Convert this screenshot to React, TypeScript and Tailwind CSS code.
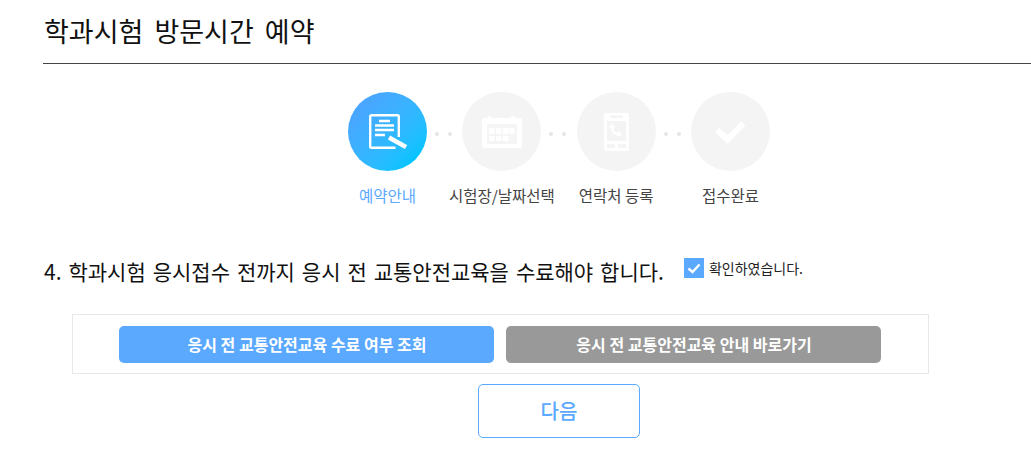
const FONT = "font-['Noto_Sans_CJK_KR','Noto_Sans',sans-serif]";

const Dots = () => (
  <div className="flex h-[79px] w-[35.3px] items-center justify-center gap-[9px] pt-[5px] pr-[2px]">
    <span className="h-[4px] w-[4px] rounded-full bg-[#e6e6e6]" />
    <span className="h-[4px] w-[4px] rounded-full bg-[#e6e6e6]" />
  </div>
);

const DocIcon = () => (
  <svg width="38" height="36" viewBox="0 0 38 36" fill="none">
    <path d="M29.800 23V2.500a1.300 1.300 0 0 0-1.300-1.300H2.500a1.300 1.300 0 0 0-1.300 1.300v30a1.300 1.300 0 0 0 1.300 1.300h24" stroke="#fff" strokeWidth="2.400" />
    <path d="M10 7h11M6 11.500h19M6 16h19M6 21h10" stroke="#fff" strokeWidth="2.400" />
    <path d="M20 23.500l17 9.500" stroke="#fff" strokeWidth="4.500" />
  </svg>
);

const CalendarIcon = () => (
  <svg width="40" height="32" viewBox="0 0 40 32">
    <path d="M2 2h4V0h3v2h20V0h4v2h5a2 2 0 0 1 2 2v26a2 2 0 0 1-2 2H2a2 2 0 0 1-2-2V4a2 2 0 0 1 2-2z" fill="#ffffff" />
    <rect x="5" y="8" width="30" height="20" fill="#f5f5f5" />
    <g fill="#ffffff">
      <rect x="7" y="12" width="5.500" height="6" />
      <rect x="14" y="12" width="5.500" height="6" />
      <rect x="21" y="12" width="5.500" height="6" />
      <rect x="27.500" y="12" width="5" height="6" />
      <rect x="7" y="20" width="5.500" height="5" />
      <rect x="14" y="20" width="5.500" height="5" />
      <rect x="21" y="20" width="5.500" height="5" />
    </g>
  </svg>
);

const PhoneIcon = () => (
  <svg width="25" height="38" viewBox="0 0 25 38">
    <rect width="25" height="38" rx="2.500" fill="#ffffff" />
    <rect x="6" y="2.500" width="13" height="2.500" fill="#f4f4f4" />
    <rect x="3" y="8" width="19" height="20" fill="#f4f4f4" />
    <rect x="3" y="31" width="8" height="4" fill="#f4f4f4" />
    <rect x="14" y="31" width="8" height="4" fill="#f4f4f4" />
    <path d="M5.500 12.500l3-1.500 2.200 3.500-1.700 1.500c.8 1.800 2.200 3.200 4 4l1.600-1.700 3.400 2.200-1.500 3c-5 0-10.500-6-10.500-11z" fill="#ffffff" />
  </svg>
);

const CheckIcon = () => (
  <svg width="32" height="24" viewBox="0 0 32 24" fill="none">
    <path d="M3 10L13.500 19.500 29.500 3.500" stroke="#ffffff" strokeWidth="6" />
  </svg>
);

const steps = [
  { label: "예약안내", icon: <DocIcon />, active: true },
  { label: "시험장/날짜선택", icon: <CalendarIcon />, active: false },
  { label: "연락처 등록", icon: <PhoneIcon />, active: false },
  { label: "접수완료", icon: <CheckIcon />, active: false },
];

export default function App() {
  return (
    <div className={`${FONT} h-[476px] w-[1031px] overflow-hidden bg-white`}>
      <div className="ml-[43px] h-[64px] border-b border-[#444444]">
        <h1 className="pt-[12px] pl-[1px] text-[27px] leading-[38px] font-normal text-[#111111] [word-spacing:5px]">
          학과시험 방문시간 예약
        </h1>
      </div>

      <div className="mt-[28px] flex justify-center pl-[87px]">
        {steps.map((step, idx) => (
          <div key={step.label} className="flex">
            {idx > 0 && <Dots />}
            <div className="flex w-[79px] flex-col items-center">
              <div
                className={
                  step.active
                    ? "flex h-[79px] w-[79px] items-center justify-center rounded-full bg-gradient-to-br from-[#4aa5ff] from-[15%] to-[#00c4ff] to-[85%]"
                    : "flex h-[79px] w-[79px] items-center justify-center rounded-full bg-[#f4f4f4]"
                }
              >
                {step.icon}
              </div>
              <span
                className={
                  step.active
                    ? "mt-[13px] text-[15.5px] leading-[22px] whitespace-nowrap text-[#5aa9ff]"
                    : "mt-[13px] text-[15.5px] leading-[22px] whitespace-nowrap text-[#444444]"
                }
              >
                {step.label}
              </span>
            </div>
          </div>
        ))}
      </div>

      <div className="mt-[50px] ml-[44px] flex items-start">
        <p className="text-[21px] leading-[30px] whitespace-nowrap text-[#111111] [word-spacing:2.25px]">
          4. 학과시험 응시접수 전까지 응시 전 교통안전교육을 수료해야 합니다.
        </p>
        <div className="mt-[2px] ml-[20px] flex items-center gap-[5px]">
          <div className="flex h-[20px] w-[20px] items-center justify-center bg-[#5aa9ff]">
            <svg width="14" height="11" viewBox="0 0 14 11" fill="none">
              <path d="M1.500 5.500L5.500 9 12.500 1.500" stroke="#fff" strokeWidth="2.400" />
            </svg>
          </div>
          <span className="text-[14px] leading-[20px] whitespace-nowrap text-[#222222]">확인하였습니다.</span>
        </div>
      </div>

      <div className="mt-[28px] ml-[72px] flex h-[60px] w-[857px] items-center justify-center gap-[12px] border border-[#e8e8e8] pr-[2px]">
        <button className="h-[37px] w-[375px] rounded-[5px] bg-[#5aa9ff] pl-[2px] text-[16px] font-bold text-white">
          응시 전 교통안전교육 수료 여부 조회
        </button>
        <button className="h-[37px] w-[375px] rounded-[5px] bg-[#999999] pl-[2px] text-[16px] font-bold text-white">
          응시 전 교통안전교육 안내 바로가기
        </button>
      </div>

      <div className="mt-[10px] flex justify-center pl-[87px]">
        <button className="h-[54px] w-[162px] rounded-[5px] border border-[#5aa9ff] text-[20px] font-medium text-[#5aa9ff]">
          다음
        </button>
      </div>
    </div>
  );
}
